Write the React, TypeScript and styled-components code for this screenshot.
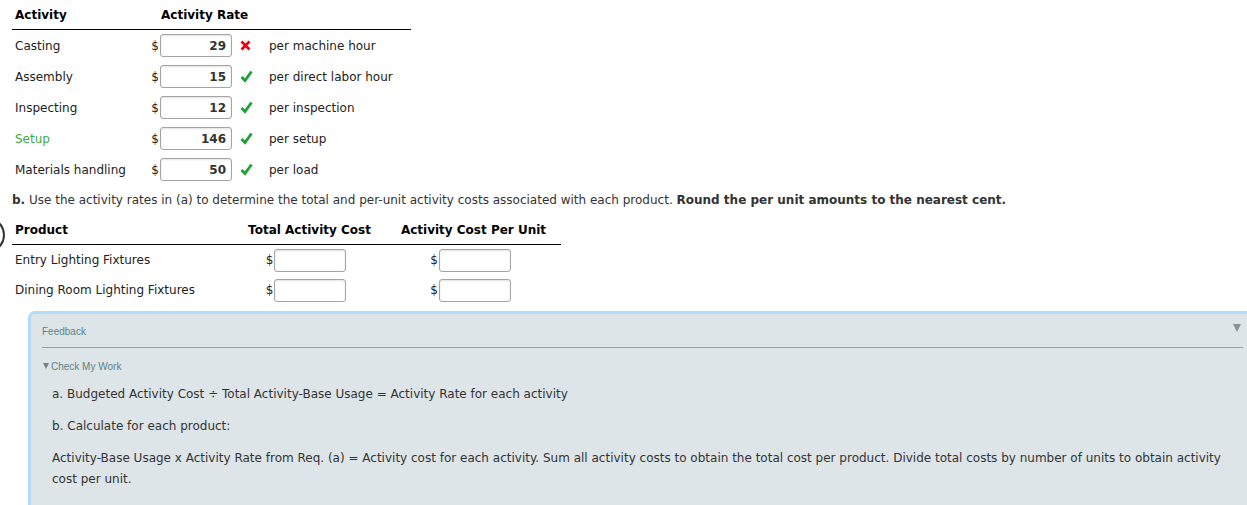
import styled, { createGlobalStyle } from "styled-components";

const GlobalStyle = createGlobalStyle`
  body {
    margin: 0;
    background: #fff;
    font-family: "DejaVu Sans", Verdana, sans-serif;
    font-size: 12px;
    color: #333;
    overflow: hidden;
  }
`;

const rates = [
  { name: "Casting", value: "29", ok: false, unit: "per machine hour" },
  { name: "Assembly", value: "15", ok: true, unit: "per direct labor hour" },
  { name: "Inspecting", value: "12", ok: true, unit: "per inspection" },
  { name: "Setup", value: "146", ok: true, unit: "per setup", highlight: true },
  { name: "Materials handling", value: "50", ok: true, unit: "per load" },
];

const products = ["Entry Lighting Fixtures", "Dining Room Lighting Fixtures"];

function Cross() {
  return (
    <svg width="11" height="11" viewBox="0 0 11 11">
      <path d="M1.5 1.5 L9.5 9.5 M9.5 1.5 L1.5 9.5" stroke="#e60012" strokeWidth="2.6" />
    </svg>
  );
}

function Check() {
  return (
    <svg width="13" height="13" viewBox="0 0 13 13">
      <path d="M1.5 7 L5 10.5 L11.5 1.5" stroke="#1ba136" strokeWidth="2.8" fill="none" />
    </svg>
  );
}

export default function App() {
  return (
    <Page>
      <GlobalStyle />
      <Badge />
      <RateGrid>
        <HeadCell>Activity</HeadCell>
        <HeadCell $span={4} $offset>Activity Rate</HeadCell>
        {rates.map((r) => (
          <Row key={r.name}>
            <Label $green={r.highlight}>{r.name}</Label>
            <Dollar>$</Dollar>
            <Field>{r.value}</Field>
            <Mark>{r.ok ? <Check /> : <Cross />}</Mark>
            <Unit>{r.unit}</Unit>
          </Row>
        ))}
      </RateGrid>

      <Instruction>
        <b>b.</b> Use the activity rates in (a) to determine the total and per-unit activity costs
        associated with each product. <b>Round the per unit amounts to the nearest cent.</b>
      </Instruction>

      <ProductGrid>
        <ProdHead>Product</ProdHead>
        <ProdHead $center $pad={7}>Total Activity Cost</ProdHead>
        <ProdHead $center $pad={10}>Activity Cost Per Unit</ProdHead>
        {products.map((p) => (
          <ProdRow key={p}>
            <Label>{p}</Label>
            <MoneyCell $pad={0}>
              <Dollar>$</Dollar>
              <Field />
            </MoneyCell>
            <MoneyCell $pad={4}>
              <Dollar>$</Dollar>
              <Field />
            </MoneyCell>
          </ProdRow>
        ))}
      </ProductGrid>

      <Feedback>
        <FeedbackHead>
          <span>Feedback</span>
          <Caret $size={4} $color="#8c9193" />
        </FeedbackHead>
        <CheckTitle>
          <Caret $size={3} $color="#7a7f81" />
          Check My Work
        </CheckTitle>
        <Hints>
          <Hint>a. Budgeted Activity Cost ÷ Total Activity-Base Usage = Activity Rate for each activity</Hint>
          <Hint>b. Calculate for each product:</Hint>
          <Hint>
            Activity-Base Usage x Activity Rate from Req. (a) = Activity cost for each activity. Sum all
            activity costs to obtain the total cost per product. Divide total costs by number of units to
            obtain activity cost per unit.
          </Hint>
        </Hints>
      </Feedback>
    </Page>
  );
}

const Page = styled.div`
  position: relative;
  padding: 8px 0 0 12px;
  height: 505px;
  box-sizing: border-box;
`;

const Badge = styled.div`
  position: absolute;
  left: -31px;
  top: 217px;
  width: 32px;
  height: 32px;
  border: 2px solid #333;
  border-radius: 50%;
`;

const RateGrid = styled.div`
  display: grid;
  grid-template-columns: 135px 13px 72px 37px 142px;
  width: 399px;
`;

const HeadCell = styled.div<{ $span?: number; $offset?: boolean }>`
  grid-column: ${(p) => (p.$span ? `span ${p.$span}` : "auto")};
  font-weight: bold;
  height: 21px;
  line-height: 15px;
  padding-left: ${(p) => (p.$offset ? "14px" : "3px")};
  border-bottom: 1px solid #000;
  color: #000;
`;

const Row = styled.div`
  display: contents;
  & > * {
    height: 31px;
    display: flex;
    align-items: center;
  }
`;

const Label = styled.div<{ $green?: boolean }>`
  padding-left: 3px;
  color: ${(p) => (p.$green ? "#3daa4a" : "#222")};
  white-space: nowrap;
`;

const Dollar = styled.span`
  justify-content: flex-end;
  padding-right: 1px;
  color: #222;
`;

const Field = styled.div`
  box-sizing: border-box;
  width: 72px;
  height: 23px !important;
  margin: auto 0;
  border: 1px solid #a4a4a4;
  border-radius: 3px;
  box-shadow: inset 0 1px 2px rgba(0, 0, 0, 0.12);
  background: #fff;
  justify-content: flex-end;
  padding-right: 5px;
  font-weight: bold;
  color: #333;
`;

const Mark = styled.div`
  padding-left: 8px;
`;

const Unit = styled.div`
  color: #222;
  white-space: nowrap;
`;

const Instruction = styled.p`
  margin: 0;
  height: 30px;
  line-height: 30px;
  color: #333;
  white-space: nowrap;
`;

const ProductGrid = styled.div`
  display: grid;
  grid-template-columns: 224px 140px 185px;
  width: 549px;
`;

const ProdHead = styled.div<{ $center?: boolean; $pad?: number }>`
  font-weight: bold;
  color: #000;
  padding: 8px 0 7px ${(p) => (p.$center ? `${p.$pad ?? 0}px` : "3px")};
  line-height: 14px;
  text-align: ${(p) => (p.$center ? "center" : "left")};
  border-bottom: 1px solid #000;
`;

const ProdRow = styled.div`
  display: contents;
  & > * {
    height: 30px;
    display: flex;
    align-items: center;
  }
`;

const MoneyCell = styled.div<{ $pad: number }>`
  justify-content: center;
  padding-left: ${(p) => p.$pad}px;
`;

const Feedback = styled.section`
  margin: 6px 0 0 16px;
  width: 1240px;
  height: 200px;
  box-sizing: border-box;
  background: #dde5e8;
  border: 3px solid #b4dcfa;
  border-right: none;
  border-radius: 7px 0 0 0;
  padding: 0 0 0 11px;
`;

const FeedbackHead = styled.div`
  display: flex;
  justify-content: space-between;
  align-items: center;
  width: 1201px;
  height: 32px;
  border-bottom: 1px solid #9a9fa1;
  font-family: "Liberation Sans", Arial, sans-serif;
  font-size: 10px;
  color: #5e8386;
  padding-top: 1px;
  & > i {
    margin: -7px 2px 0 0;
  }
`;

const Caret = styled.i<{ $size: number; $color: string }>`
  display: inline-block;
  width: 0;
  height: 0;
  border-left: ${(p) => p.$size}px solid transparent;
  border-right: ${(p) => p.$size}px solid transparent;
  border-top: ${(p) => p.$size * 2}px solid ${(p) => p.$color};
`;

const CheckTitle = styled.div`
  display: flex;
  align-items: center;
  gap: 2px;
  font-family: "Liberation Sans", Arial, sans-serif;
  font-size: 10px;
  color: #5e8386;
  margin-top: 13px;
  padding-left: 1px;
  & > i {
    margin-top: -2px;
  }
`;

const Hints = styled.div`
  padding-top: 1px;
`;

const Hint = styled.p`
  margin: 11px 0 0 10px;
  line-height: 21px;
  color: #333;
  width: 1190px;
`;
